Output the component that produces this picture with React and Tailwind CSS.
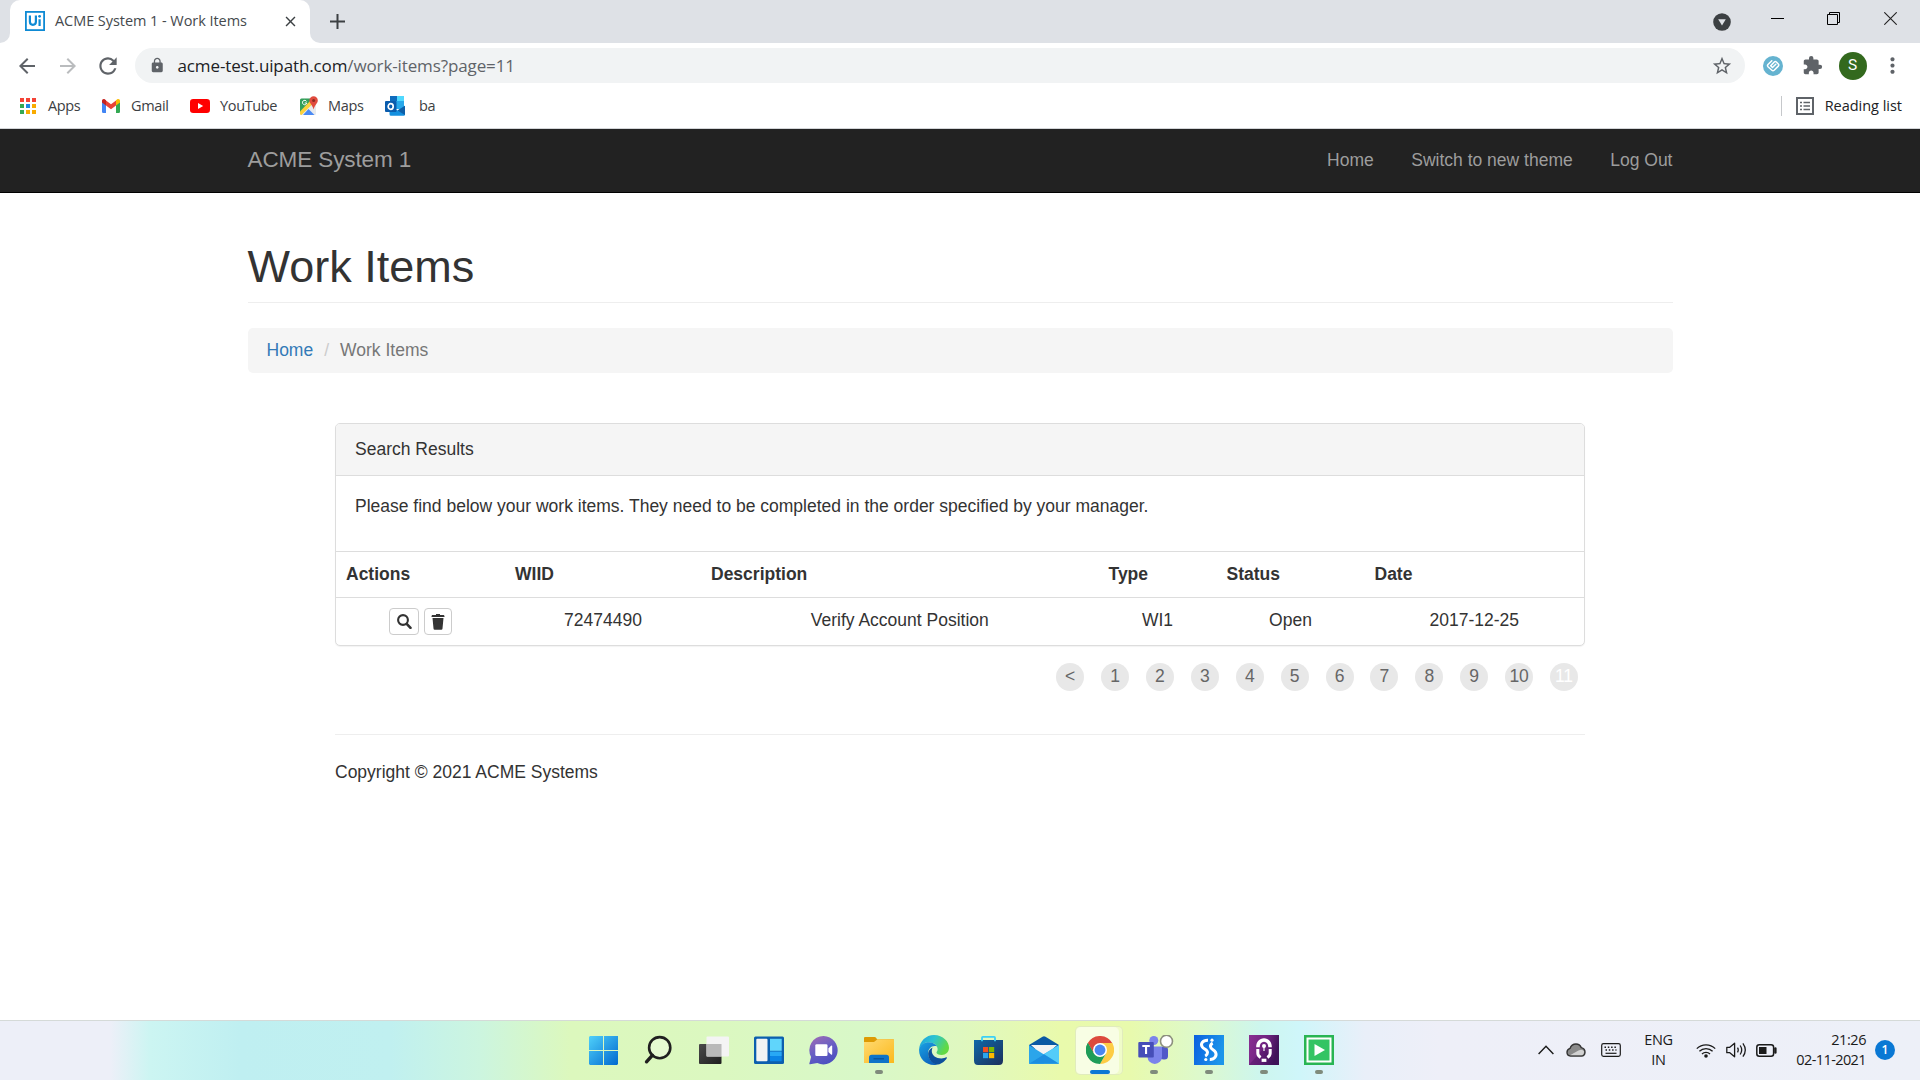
import React from "react";
import {
  MdArrowBack,
  MdArrowForward,
  MdRefresh,
  MdLock,
  MdStarBorder,
  MdExtension,
  MdMoreVert,
  MdClose,
} from "react-icons/md";

const SEGOE = "font-['Open_Sans','Noto_Sans',sans-serif]";

/* ---------- Browser tab strip ---------- */

function UiPathIcon() {
  return (
    <svg width="20" height="20" viewBox="0 0 20 20" fill="none" className="shrink-0">
      <rect x="0.9" y="0.9" width="18.2" height="18.2" fill="#fff" stroke="#0e8ad4" strokeWidth="1.8" />
      <path d="M4.9 4.6v6.2a3 3 0 0 0 6 0V4.6M14.6 8.2V15" stroke="#0e8ad4" strokeWidth="2.2" />
      <circle cx="14.6" cy="5.3" r="1.4" fill="#0e8ad4" />
    </svg>
  );
}

function TabStrip() {
  return (
    <div className="flex h-[43px] shrink-0 bg-[#dee1e6]">
      <div className="h-full w-2.5 bg-white">
        <div className="h-full w-full rounded-br-[10px] bg-[#dee1e6]" />
      </div>
      <div className="flex h-full w-[300px] items-center rounded-t-[10px] bg-white pb-px pl-[15px]">
        <UiPathIcon />
        <span className="ml-2.5 w-[219px] whitespace-nowrap text-[14.5px] tracking-[-0.06px] text-[#45494d]">
          ACME System 1 - Work Items
        </span>
        <span className="grid w-8 place-items-center">
          <MdClose size={17} className="text-[#3c4043]" />
        </span>
      </div>
      <div className="h-full w-2.5 bg-white">
        <div className="h-full w-full rounded-bl-[10px] bg-[#dee1e6]" />
      </div>
      <div className="grid h-full w-[35px] place-items-center pb-px">
        <svg width="15" height="15" viewBox="0 0 15 15" stroke="#3c4043" strokeWidth="2">
          <path d="M7.500 0v15M0 7.500h15" />
        </svg>
      </div>
      <div className="ml-auto flex h-full">
        <div className="grid w-[54px] place-items-center">
          <svg width="18" height="18" viewBox="0 0 18 18">
            <circle cx="9" cy="9" r="8.8" fill="#3c4043" />
            <path d="M5.2 6.2h7.6L9 12.4z" fill="#dee1e6" />
          </svg>
        </div>
        <div className="flex w-[57px] justify-center pt-[18px]">
          <div className="h-px w-[13px] bg-black" />
        </div>
        <div className="flex w-[55px] justify-center pt-3">
          <svg width="13" height="13" viewBox="0 0 13 13" fill="none" stroke="#000" strokeWidth="1">
            <path d="M.5 2.500h10v10H.5zM2.500 2.500V.5h10v10h-2" />
          </svg>
        </div>
        <div className="flex w-[59px] justify-center pt-3">
          <svg width="13" height="13" viewBox="0 0 13 13" fill="none" stroke="#222" strokeWidth="1.1">
            <path d="M.3.3l12.4 12.4M12.700.3L.3 12.700" />
          </svg>
        </div>
      </div>
    </div>
  );
}

/* ---------- Address bar ---------- */

function Toolbar() {
  return (
    <div className="flex h-[45px] shrink-0 items-center bg-white text-[#5f6368]">
      <span className="ml-[7px] grid w-10 place-items-center">
        <MdArrowBack size={24} />
      </span>
      <span className="grid w-[41px] place-items-center text-[#babcbe]">
        <MdArrowForward size={24} />
      </span>
      <span className="grid w-10 place-items-center">
        <MdRefresh size={26} />
      </span>
      <div className="ml-[7px] flex h-[35px] w-[1610px] items-center rounded-full bg-[#f1f3f4]">
        <MdLock size={16.5} className="ml-[14px] shrink-0" />
        <span className="ml-[12px] whitespace-nowrap pt-px text-[17px] tracking-[-0.12px] text-[#5f6368]">
          <span className="text-[#202124]">acme-test.uipath.com</span>/work-items?page=11
        </span>
        <MdStarBorder size={22} className="ml-auto mr-3" />
      </div>
      <span className="ml-[7px] grid w-[41px] place-items-center">
        <svg width="20" height="20" viewBox="0 0 20 20" fill="none" stroke="#fff" strokeLinecap="round" strokeLinejoin="round">
          <circle cx="10" cy="10" r="10" fill="#65b3d0" stroke="none" />
          <path d="M12.800 8.300L9.500 11.500 7.700 9.800 11.300 6q1-1 2.100 0l1.900 2q1 1.100 0 2.100l-4.200 4.200q-1.100 1-2.200 0l-3.900-3.600q-1-1.100 0-2.200L8.800 4.800" strokeWidth="1.500" />
        </svg>
      </span>
      <span className="grid w-[39px] place-items-center">
        <MdExtension size={21} />
      </span>
      <span className="grid w-[41px] place-items-center">
        <span className="grid size-7 place-items-center rounded-full bg-[#33691e] font-['Roboto',sans-serif] text-[15.500px] text-white">
          S
        </span>
      </span>
      <span className="grid w-[38px] place-items-center">
        <MdMoreVert size={25} />
      </span>
    </div>
  );
}

/* ---------- Bookmarks bar ---------- */

function AppsIcon() {
  const colors = ["#f44336", "#f44336", "#f44336", "#34a853", "#1e88e5", "#f9ab00", "#34a853", "#f9ab00", "#f9ab00"];
  return (
    <span className="grid size-[16px] grid-cols-3 gap-[2px]">
      {colors.map((c, i) => (
        <span key={i} style={{ background: c }} />
      ))}
    </span>
  );
}

function GmailIcon() {
  return (
    <svg width="18" height="14" viewBox="0 0 18 14">
      <path d="M0 2.400L4 5v9H1.200A1.200 1.200 0 0 1 0 12.800z" fill="#4285f4" />
      <path d="M18 2.400L14 5v9h2.800a1.200 1.200 0 0 0 1.200-1.200z" fill="#34a853" />
      <path d="M4 1.500l5 3.800 5-3.800v5L9 10.300 4 6.500z" fill="#ea4335" />
      <path d="M0 3.500V1.800C0 .3 1.700-.5 3 .5l1 .8v5.200z" fill="#c5221f" />
      <path d="M18 3.500V1.800C18 .3 16.300-.5 15 .5l-1 .8v5.200z" fill="#fbbc04" />
    </svg>
  );
}

function YouTubeIcon() {
  return (
    <svg width="20" height="14" viewBox="0 0 20 14">
      <rect width="20" height="14" rx="3.200" fill="#f00" />
      <path d="M8 4l5.200 3L8 10z" fill="#fff" />
    </svg>
  );
}

function MapsIcon() {
  return (
    <svg width="20" height="20" viewBox="0 0 20 20">
      <defs>
        <clipPath id="mapsClip">
          <rect x="1" y="2.500" width="16" height="16.500" rx="1.500" />
        </clipPath>
      </defs>
      <g clipPath="url(#mapsClip)">
        <rect x="1" y="2" width="16" height="17" fill="#e8eaed" />
        <path d="M0 1h17L1 18z" fill="#34a05a" />
        <path d="M0 16.500L12 4l2.500 3L1.500 20z" fill="#fdd23c" />
        <path d="M4 19l5.500-6 6 6z" fill="#4a8af4" />
      </g>
      <path d="M7.600 5.500A2.200 2.200 0 1 0 7.800 7H5.700" fill="none" stroke="#fff" strokeWidth="1" />
      <path d="M14.600.3a4.200 4.200 0 0 1 4.200 4.200c0 2.800-3 4.200-4.200 9-1.200-4.800-4.200-6.200-4.200-9A4.200 4.200 0 0 1 14.600.3z" fill="#e04b3e" />
      <circle cx="14.600" cy="4.600" r="1.500" fill="#8c2a20" />
    </svg>
  );
}

function OutlookIcon() {
  return (
    <svg width="20" height="20" viewBox="0 0 20 20">
      <rect x="5" y="0" width="14" height="13" rx="1" fill="#28a8ea" />
      <rect x="5" y="0" width="7" height="5" fill="#0f6cbd" />
      <rect x="12" y="0" width="7" height="5" fill="#50d9ff" />
      <rect x="12" y="5" width="7" height="4.500" fill="#28a8ea" />
      <path d="M4.500 10l8 4.500L20 9.700V18.500a1.300 1.300 0 0 1-1.300 1.300H6A1.500 1.500 0 0 1 4.500 18.300z" fill="#1490df" />
      <path d="M20 9.700V19L12.500 14.500z" fill="#0f5fa8" />
      <rect x="0" y="5" width="11.500" height="11" rx="1" fill="#0a5cad" />
      <ellipse cx="5.700" cy="10.500" rx="2.500" ry="2.800" fill="none" stroke="#fff" strokeWidth="1.700" />
    </svg>
  );
}

function Bookmark({ icon, className, iconBox, children }) {
  return (
    <div className={"flex shrink-0 items-center " + className}>
      <span className={"grid place-items-center " + iconBox}>{icon}</span>
      <span className="whitespace-nowrap">{children}</span>
    </div>
  );
}

function BookmarksBar() {
  return (
    <div className="flex h-[41px] shrink-0 items-center border-b border-[#d3d5d8] bg-white pb-[5px] text-[14.5px] tracking-[-0.35px] text-[#3c4043]">
      <Bookmark icon={<AppsIcon />} className="ml-5 w-[82px]" iconBox="w-4 mr-3">Apps</Bookmark>
      <Bookmark icon={<GmailIcon />} className="w-[88px]" iconBox="w-[18px] mr-[11px]">Gmail</Bookmark>
      <Bookmark icon={<YouTubeIcon />} className="w-[109px]" iconBox="w-5 mr-[10px]">YouTube</Bookmark>
      <Bookmark icon={<MapsIcon />} className="w-[86px]" iconBox="w-5 mr-[9px]">Maps</Bookmark>
      <Bookmark icon={<OutlookIcon />} className="w-20" iconBox="w-5 mr-[14px]">ba</Bookmark>
      <div className="ml-auto flex items-center pr-[18px] text-[#202124]">
        <span className="h-5 w-px bg-[#c6c8cb]" />
        <svg width="18" height="18" viewBox="0 0 18 18" fill="none" stroke="#5f6368" className="ml-[14px] mr-[11px]">
          <rect x="1" y="1" width="16" height="16" strokeWidth="2" />
          <path d="M4 5.500h2M4 9h2M4 12.500h2M7.500 5.500H14M7.500 9H14M7.500 12.500H14" strokeWidth="1.500" />
        </svg>
        <span className="whitespace-nowrap tracking-[-0.02px]">Reading list</span>
      </div>
    </div>
  );
}

/* ---------- Web page ---------- */

function Navbar() {
  return (
    <nav className="h-16 shrink-0 border-b border-black bg-[#222] text-[#9d9d9d]">
      <div className="mx-auto flex h-full w-[1425px] items-center justify-between">
        <span className="pb-px text-[22.5px] tracking-[-0.1px]">ACME System 1</span>
        <div className="flex gap-[37.5px]">
          <span>Home</span>
          <span>Switch to new theme</span>
          <span>Log Out</span>
        </div>
      </div>
    </nav>
  );
}

function SearchGlyph() {
  return (
    <svg width="15" height="15" viewBox="0 0 15 15" fill="none" stroke="#333">
      <circle cx="6" cy="6" r="4.900" strokeWidth="2.100" />
      <path d="M9.700 9.800l3.800 4" strokeWidth="2.600" strokeLinecap="round" />
    </svg>
  );
}

function TrashGlyph() {
  return (
    <svg width="14" height="16" viewBox="0 0 14 16" fill="#333">
      <path d="M5 0h4v1h3.700q.7 0 .8 1.500v.5H.5v-.5Q.6 1 1.300 1H5z" />
      <path d="M1.500 4h11l-1 10.500q-.1 1.200-1.200 1.200H3.700q-1.100 0-1.200-1.200z" />
    </svg>
  );
}

const COLUMNS = [
  { title: "Actions", width: "w-[169px]" },
  { title: "WIID", width: "w-[196px]", value: "72474490" },
  { title: "Description", width: "w-[397.5px]", value: "Verify Account Position" },
  { title: "Type", width: "w-[118px]", value: "WI1" },
  { title: "Status", width: "w-[148px]", value: "Open" },
  { title: "Date", width: "w-[219.5px]", value: "2017-12-25" },
];

function ResultsPanel() {
  return (
    <section className="h-[223px] overflow-hidden rounded-[5px] border border-[#ddd] bg-white shadow-[0_1px_1px_rgba(0,0,0,0.05)]">
      <div className="flex h-[52px] items-center border-b border-[#ddd] bg-[#f5f5f5] px-[19px] pb-px">Search Results</div>
      <div className="h-[75px] px-[19px] pt-[18px] leading-[25px]">
        Please find below your work items. They need to be completed in the order specified by your manager.
      </div>
      <div className="flex h-[46px] items-center border-t border-[#ddd] pb-px font-bold">
        {COLUMNS.map((c) => (
          <div key={c.title} className={"shrink-0 px-2.5 " + c.width}>
            {c.title}
          </div>
        ))}
      </div>
      <div className="flex h-12 items-start border-t border-[#ddd] pt-2.5 text-center leading-[25px]">
        {COLUMNS.map((c) =>
          c.value ? (
            <div key={c.title} className={"shrink-0 " + c.width}>
              {c.value}
            </div>
          ) : (
            <div key={c.title} className={"flex shrink-0 justify-center gap-[5px] " + c.width}>
              <span className="grid h-[27px] w-[30px] place-items-center rounded-[4px] border border-[#ccc]">
                <SearchGlyph />
              </span>
              <span className="grid h-[27px] w-7 place-items-center rounded-[4px] border border-[#ccc]">
                <TrashGlyph />
              </span>
            </div>
          )
        )}
      </div>
    </section>
  );
}

function Pager() {
  const pages = ["<", "1", "2", "3", "4", "5", "6", "7", "8", "9", "10", "11"];
  return (
    <div className="mt-[17px] flex justify-end gap-[16.900px] pr-[7px] text-[#666]">
      {pages.map((p) => (
        <span
          key={p}
          className={
            "grid size-7 place-items-center rounded-full bg-[#e8e8e8] pb-px leading-none " +
            (p === "11" ? "text-white" : "")
          }
        >
          {p}
        </span>
      ))}
    </div>
  );
}

function WebPage() {
  return (
    <div className="flex min-h-0 flex-1 flex-col bg-white font-['Liberation_Sans',Arial,sans-serif] text-[17.5px] text-[#333]">
      <Navbar />
      <main className="mx-auto w-[1425px]">
        <h1 className="mt-[49px] h-[61px] border-b border-[#eee] text-[45px] leading-[50px]">Work Items</h1>
        <div className="mt-[25px] flex h-[45px] items-center rounded-[5px] bg-[#f5f5f5] px-[19px]">
          <span className="text-[#337ab7]">Home</span>
          <span className="px-[11px] text-[#ccc]">/</span>
          <span className="text-[#777]">Work Items</span>
        </div>
        <div className="mx-auto mt-[50px] w-[1250px]">
          <ResultsPanel />
          <Pager />
          <footer className="mt-[43px] border-t border-[#eee] pt-[25px] leading-[25px]">
            Copyright © 2021 ACME Systems
          </footer>
        </div>
      </main>
    </div>
  );
}

/* ---------- Taskbar icons ---------- */

function StartIcon() {
  return (
    <svg width="30" height="30" viewBox="0 0 30 30">
      <defs>
        <linearGradient id="startGrad" x1="0" y1="0" x2="1" y2="1">
          <stop offset="0" stopColor="#4fd0fa" />
          <stop offset="1" stopColor="#0069cf" />
        </linearGradient>
      </defs>
      <path d="M1 1h13v14H0V2zM15 1h14v14H15zM0 16h14v14H1L0 29zM15 16h14v13l-1 1H15z" fill="url(#startGrad)" />
    </svg>
  );
}

function SearchIcon() {
  return (
    <svg width="30" height="30" viewBox="0 0 30 30" fill="none">
      <circle cx="15.700" cy="12.700" r="10.600" fill="#fff" fillOpacity="0.3" stroke="#202020" strokeWidth="2.600" />
      <path d="M8.500 20.200L2.500 26.800" stroke="#202020" strokeWidth="3.400" strokeLinecap="round" />
    </svg>
  );
}

function TaskViewIcon() {
  return (
    <svg width="30" height="30" viewBox="0 0 30 30">
      <defs>
        <linearGradient id="tvDark" x1="0" y1="0" x2="1" y2="1">
          <stop offset="0" stopColor="#4a4a4a" />
          <stop offset="1" stopColor="#1e1e1e" />
        </linearGradient>
      </defs>
      <rect x="0" y="9" width="22.500" height="20" rx="1" fill="url(#tvDark)" />
      <rect x="7.500" y="1.500" width="22.500" height="20" rx="1" fill="#f4f4f4" />
      <path d="M7.500 9h15v12.500h-15z" fill="#b9b9b9" />
    </svg>
  );
}

function WidgetsIcon() {
  return (
    <svg width="30" height="30" viewBox="0 0 30 30">
      <rect x="0" y="1.500" width="30" height="27.500" rx="1.500" fill="#0c5fae" />
      <rect x="2.300" y="3.800" width="11.200" height="22.500" rx="1" fill="#f3f3f3" />
      <rect x="16" y="3.800" width="11.700" height="12" fill="#60d5fb" />
      <rect x="16" y="16.500" width="11.700" height="4.600" fill="#28a8f5" />
      <rect x="16" y="21.100" width="11.700" height="5.200" rx=".6" fill="#0b84e6" />
    </svg>
  );
}

function ChatIcon() {
  return (
    <svg width="30" height="30" viewBox="0 0 30 30">
      <defs>
        <linearGradient id="chatGrad" x1="0.100" y1="0" x2="0.600" y2="1">
          <stop offset="0" stopColor="#a06bb4" />
          <stop offset="0.500" stopColor="#6a60c4" />
          <stop offset="1" stopColor="#4c4fc0" />
        </linearGradient>
      </defs>
      <path d="M14.600 1a14.200 14.200 0 1 1-6.300 27L1.100 29.300q-1 .1-.7-1l1.700-6.200A14.200 14.200 0 0 1 14.600 1z" fill="url(#chatGrad)" />
      <rect x="6.300" y="9.200" width="12.200" height="11.800" rx="1.300" fill="#fff" />
      <path d="M19.400 13.400l2.600-2.600q1.200-.8 1.200.6v7.400q0 1.400-1.200.6l-2.600-2.500z" fill="#fff" />
    </svg>
  );
}

function ExplorerIcon() {
  return (
    <svg width="30" height="30" viewBox="0 0 30 30">
      <defs>
        <linearGradient id="folderGrad" x1="0" y1="0" x2="1" y2="1">
          <stop offset="0" stopColor="#ffda73" />
          <stop offset="1" stopColor="#fbb91c" />
        </linearGradient>
      </defs>
      <path d="M0 3Q0 2 1 2h9.500q1 0 1.600.8L13 4.300H29q1 0 1 1v4H0z" fill="#dd9a04" />
      <path d="M0 7h10l3.500-2.700H29q1 0 1 1V28H0z" fill="url(#folderGrad)" />
      <path d="M5 28v-5.500q0-2.800 2.800-2.800h14.400q2.800 0 2.800 2.800V28z" fill="#0f74c8" />
      <path d="M9.500 23.800h10.500" stroke="#0b4f94" strokeWidth="1.200" />
    </svg>
  );
}

function EdgeIcon() {
  return (
    <svg width="30" height="30" viewBox="0 0 24 24">
      <defs>
        <linearGradient id="edgeTop" x1="0" y1="0" x2="1" y2="0.400">
          <stop offset="0" stopColor="#1b9de2" />
          <stop offset="0.500" stopColor="#2cc4d0" />
          <stop offset="1" stopColor="#62d944" />
        </linearGradient>
        <linearGradient id="edgeLeft" x1="0" y1="0" x2="0.600" y2="1">
          <stop offset="0" stopColor="#1ba3e4" />
          <stop offset="1" stopColor="#0c63bd" />
        </linearGradient>
      </defs>
      <path d="M.1 11.200C.6 5 5.600 0 12 0c7.400 0 12 5.400 12 10.200 0 3.600-2.600 5.700-5.800 5.700-2.600 0-4.200-.9-4.200-1.900 0-.6.9-1 .9-2.600 0-2.700-2.600-5.700-6.900-5.700C4 5.700 1 8.500.1 11.200z" fill="url(#edgeTop)" />
      <path d="M.1 11.200C.9 7.800 4.200 5.700 8 5.700c3 0 5.200 1.500 6.300 3.300C10 8 7.300 11 7.300 14.500c0 4.500 3.500 8.200 7.600 9.200-1 .2-1.900.3-2.900.3C5 24-.5 18.200.1 11.200z" fill="url(#edgeLeft)" />
      <path d="M11 9.900c-2 .8-3.700 2.600-3.700 5 0 5 4.200 8.900 7.900 8.700 3.300-.8 6-3.300 7-5.100.3-.5-.1-.8-.6-.6-.8.400-2 .900-3.700.9-4.200 0-7.700-2.500-7.700-6 0-1.200.3-2.100.8-2.900z" fill="#0d4f9c" />
    </svg>
  );
}

function StoreIcon() {
  return (
    <svg width="30" height="30" viewBox="0 0 30 30">
      <defs>
        <linearGradient id="storeGrad" x1="0" y1="0" x2="1" y2="1">
          <stop offset="0" stopColor="#0f68a8" />
          <stop offset="1" stopColor="#1c2f5c" />
        </linearGradient>
      </defs>
      <path d="M0 5h29v20.500q0 4.500-4 4.500H4q-4 0-4-4.500z" fill="url(#storeGrad)" />
      <path d="M8 6.200V2.700q0-.8.800-.8h11.400q.8 0 .8.800v3.500" fill="none" stroke="#3cd0f6" strokeWidth="1.800" />
      <rect x="9" y="12" width="5.200" height="5.200" fill="#f25022" />
      <rect x="15" y="12" width="5.200" height="5.200" fill="#7fba00" />
      <rect x="9" y="18" width="5.200" height="5.200" fill="#2ba5ee" />
      <rect x="15" y="18" width="5.200" height="5.200" fill="#ffb900" />
    </svg>
  );
}

function MailIcon() {
  return (
    <svg width="30" height="30" viewBox="0 0 30 30">
      <path d="M0 10L13.500 1.800Q15 .8 16.500 1.800L30 10v4H0z" fill="#0a58a4" />
      <path d="M2 10h26L15 22z" fill="#f3f3f3" />
      <path d="M0 10l15 9.500V28.800H0z" fill="#2ba5ea" />
      <path d="M30 10v18.800H0L15 19z" fill="#31b3f0" />
      <path d="M15 19.200L30 10v18.800z" fill="#54ccf8" />
      <path d="M15 19.200L30 28.800H0z" fill="#1c8ee0" />
    </svg>
  );
}

function ChromeIcon() {
  return (
    <svg width="28" height="28" viewBox="0 0 48 48">
      <path d="M24 24L3.200 12A24 24 0 0 1 44.800 12H24z" fill="#dc4a3d" />
      <path d="M24 24L44.800 12A24 24 0 0 1 24 48l10.400-18z" fill="#fdcc44" />
      <path d="M24 24l10.400 6L24 48A24 24 0 0 1 3.200 12l10.400 18z" fill="#1f9d58" />
      <path d="M24 12h20.800a24 24 0 0 1 .9 2L34.400 30z" fill="#fdcc44" />
      <path d="M13.600 30L3.200 12 24 12z" fill="#dc4a3d" />
      <path d="M3.200 12L13.600 30l10.400 6-7 10.900A24 24 0 0 1 3.200 12z" fill="#1f9d58" />
      <circle cx="24" cy="24" r="12" fill="#fff" />
      <circle cx="24" cy="24" r="9.300" fill="#4a86f0" />
    </svg>
  );
}

function TeamsIcon() {
  return (
    <svg width="36" height="30" viewBox="0 0 36 30" className="ml-1">
      <circle cx="15.800" cy="5.500" r="4.500" fill="#7b83eb" />
      <rect x="22" y="11.500" width="8" height="13" rx="3.500" fill="#5059c9" />
      <path d="M9.500 11.500H24v10.200a7.200 7.200 0 0 1-14.500 0z" fill="#7b83eb" />
      <rect x="0.300" y="7" width="15.500" height="15.500" rx="1" fill="#464eb8" />
      <path d="M4.300 11h7.500M8.050 11v8" stroke="#fff" strokeWidth="2.100" />
      <circle cx="28.500" cy="6.200" r="6" fill="#fff" stroke="#8c8f7e" strokeWidth="1.600" />
    </svg>
  );
}

function BlueLinkIcon() {
  return (
    <svg width="30" height="30" viewBox="0 0 30 30" fill="none" stroke="#fff">
      <defs>
        <linearGradient id="blueTile" x1="0" y1="0" x2="1" y2="0.300">
          <stop offset="0" stopColor="#0a5fe0" />
          <stop offset="1" stopColor="#1c95ea" />
        </linearGradient>
      </defs>
      <rect width="30" height="30" fill="url(#blueTile)" stroke="none" />
      <path d="M14 5.200C8.500 5 6.200 8.800 8.300 12c1.500 2.200 5.200 2.300 5.200 5.500 0 1.700-.9 2.800-2.300 3.600" strokeWidth="3" />
      <path d="M18.700 8.200c-1.600.8-2.400 2-2.200 3.500.3 2.800 3.700 3 5 5.500 1.700 3.500-.8 7.400-5.700 7.300" strokeWidth="3" />
      <circle cx="18" cy="5.200" r="1.600" fill="#fff" stroke="none" />
      <circle cx="11.800" cy="24.500" r="1.600" fill="#fff" stroke="none" />
    </svg>
  );
}

function PurpleIcon() {
  return (
    <svg width="30" height="30" viewBox="0 0 30 30" fill="none" stroke="#fff">
      <defs>
        <linearGradient id="purpleTile" x1="0" y1="0" x2="1" y2="0.300">
          <stop offset="0" stopColor="#8a2f92" />
          <stop offset="0.600" stopColor="#6f2380" />
          <stop offset="1" stopColor="#3f1258" />
        </linearGradient>
      </defs>
      <rect width="30" height="30" fill="url(#purpleTile)" stroke="none" />
      <path d="M0 30l15-17 13 17z" fill="#3f1258" fillOpacity="0.350" stroke="none" />
      <path d="M7.200 12.300C7 6.800 10.500 3.300 15 3.300s8 3.500 7.800 9h-3.500c0-3.500-1.600-5.600-4.300-5.600s-4.300 2.100-4.300 5.600z" fill="#fff" stroke="none" />
      <path d="M8.800 14v4.200q0 2.500 2.800 4.300M21.200 14v4.200q0 2.500-2.800 4.300" strokeWidth="3" />
      <path d="M12.600 25.300h4.800" strokeWidth="3.200" />
      <path d="M15 11v5" strokeWidth="1.200" />
      <circle cx="15" cy="11" r="2" fill="#fff" stroke="none" />
    </svg>
  );
}

function GreenPlayIcon() {
  return (
    <svg width="30" height="30" viewBox="0 0 30 30">
      <rect width="30" height="30" fill="#28b553" />
      <rect x="3.500" y="3.500" width="23" height="23" fill="#34c464" stroke="#fff" strokeWidth="2" />
      <path d="M10.500 9v12l10.500-6z" fill="#fff" />
    </svg>
  );
}

function TaskbarItem({ icon, running, active }) {
  if (active) {
    return (
      <div className="flex h-full w-[55px] justify-center pt-[5px]">
        <div className="h-[49px] w-[48px] rounded-[5px] border border-[#00000010] bg-white/35">
          <div className="flex h-full w-[43px] flex-col items-center rounded-[5px] bg-white/50 pl-[4px] pt-[9px]">
            {icon}
            <span className="mt-[6px] h-1 w-5 rounded-full bg-[#0a78d4]" />
          </div>
        </div>
      </div>
    );
  }
  return (
    <div className="flex h-full w-[55px] flex-col items-center pt-[14px]">
      {icon}
      {running && <span className="mt-[5px] h-1 w-2 rounded-full bg-[#7f8b7c]" />}
    </div>
  );
}

function Tray() {
  return (
    <div className="flex h-full items-center pb-px pr-[25px] text-[#1b1b1b]">
      <svg width="16" height="10" viewBox="0 0 16 10" fill="none" stroke="#1b1b1b" strokeWidth="1.400">
        <path d="M.6 9L8 1.200 15.400 9" />
      </svg>
      <svg width="20" height="14" viewBox="0 0 20 14" className="ml-3">
        <path d="M4.500 13A3.700 3.700 0 0 1 1 9.300q0-3 3-3.900Q5.500 1 10 1q3.800 0 5.200 3.600Q19 5.300 19 9.200 18.800 13 15.500 13z" fill="#8a8a8a" stroke="#333" strokeWidth="1.400" />
        <path d="M4 12.300L12.500 7.500q4-1.800 5.600 1-.2 3.700-2.800 3.800z" fill="#d2d2d2" />
      </svg>
      <svg width="20" height="14" viewBox="0 0 20 14" fill="none" stroke="#1b1b1b" className="ml-[15px]">
        <rect x=".7" y=".7" width="18.600" height="12.600" rx="1.800" strokeWidth="1.200" />
        <path d="M3.500 4.200h13M4.500 7h11" strokeWidth="1.500" strokeDasharray="1.500 1.800" />
        <path d="M4.500 10.300h11" strokeWidth="1.200" />
      </svg>
      <div className="ml-[15px] w-[45px] pb-px text-center text-[14.5px] leading-5 tracking-[-0.3px]">
        <div>ENG</div>
        <div>IN</div>
      </div>
      <svg width="20" height="15" viewBox="0 0 20 15" fill="none" stroke="#1b1b1b" strokeWidth="1.300" className="ml-[15px]">
        <path d="M.8 5.600a13 13 0 0 1 18.400 0M3.400 8.300a9.300 9.300 0 0 1 13.200 0M6 11a5.600 5.600 0 0 1 8 0" />
        <circle cx="10" cy="13" r="1.800" fill="#1b1b1b" stroke="none" />
      </svg>
      <svg width="21" height="16" viewBox="0 0 21 16" fill="none" stroke="#1b1b1b" strokeWidth="1.300" strokeLinejoin="round" className="ml-2.5">
        <path d="M.8 5.300h3L8.600 1.200v13.600L3.800 10.700h-3zM11.500 5.600q1.500 2.400 0 4.800M14.200 3.500q3 4.500 0 9M16.900 1.300q4.800 6.700 0 13.400" />
      </svg>
      <svg width="21" height="13" viewBox="0 0 21 13" fill="none" stroke="#1b1b1b" className="ml-[9px]">
        <rect x=".8" y=".8" width="16.800" height="11.400" rx="2.500" strokeWidth="1.500" />
        <rect x="3" y="3" width="7.500" height="7" fill="#1b1b1b" stroke="none" />
        <path d="M19.400 4.500v4" strokeWidth="2.400" strokeLinecap="round" />
      </svg>
      <div className="w-[89px] pb-px text-right text-[14.5px] leading-5">
        <div className="tracking-[-0.45px]">21:26</div>
        <div className="tracking-[-0.6px]">02-11-2021</div>
      </div>
      <span className="ml-[9px] grid size-5 place-items-center rounded-full bg-[#0a78d4] text-[12px] font-semibold leading-none text-white">
        1
      </span>
    </div>
  );
}

function Taskbar() {
  return (
    <div className="flex h-[60px] shrink-0 border-t border-[#d5dad8] bg-[linear-gradient(90deg,#edeff8_0px,#edeff8_110px,#ccf5f2_150px,#bfeff1_240px,#c0f0f0_390px,#ccf5df_480px,#dcf8bd_570px,#dbf8c0_720px,#d8f8c8_860px,#dff8c0_960px,#e9faac_1060px,#e8faad_1130px,#ddf9cc_1200px,#cdf6ee_1260px,#cff6fa_1300px,#e9eff9_1365px,#eeeff8_1440px,#edf0f8_1920px)]">
      <div className="ml-[576.5px] flex h-full">
        <TaskbarItem icon={<StartIcon />} />
        <TaskbarItem icon={<SearchIcon />} />
        <TaskbarItem icon={<TaskViewIcon />} />
        <TaskbarItem icon={<WidgetsIcon />} />
        <TaskbarItem icon={<ChatIcon />} />
        <TaskbarItem icon={<ExplorerIcon />} running />
        <TaskbarItem icon={<EdgeIcon />} />
        <TaskbarItem icon={<StoreIcon />} />
        <TaskbarItem icon={<MailIcon />} />
        <TaskbarItem icon={<ChromeIcon />} active />
        <TaskbarItem icon={<TeamsIcon />} running />
        <TaskbarItem icon={<BlueLinkIcon />} running />
        <TaskbarItem icon={<PurpleIcon />} running />
        <TaskbarItem icon={<GreenPlayIcon />} running />
      </div>
      <div className="ml-auto h-full">
        <Tray />
      </div>
    </div>
  );
}

export default function App() {
  return (
    <div className={"flex h-[1080px] w-[1920px] flex-col overflow-hidden bg-white " + SEGOE}>
      <TabStrip />
      <Toolbar />
      <BookmarksBar />
      <WebPage />
      <Taskbar />
    </div>
  );
}
